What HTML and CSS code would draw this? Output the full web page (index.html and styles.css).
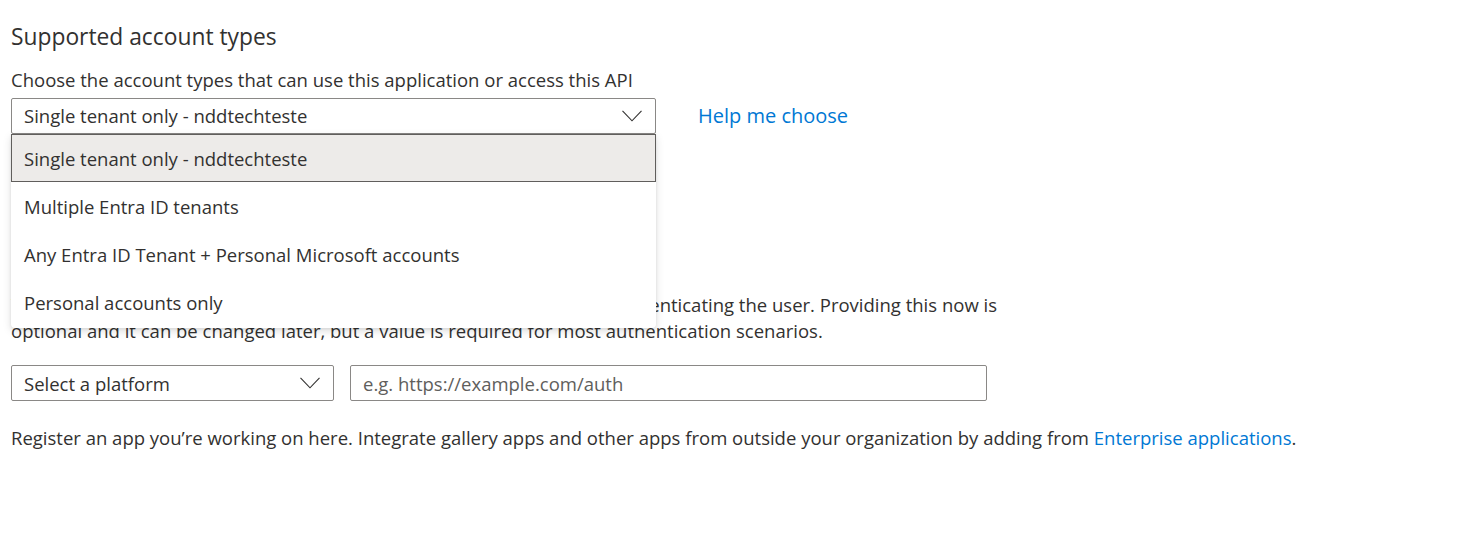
FILE: index.html
```html
<!DOCTYPE html>
<html lang="en">
<head>
<meta charset="utf-8">
<title>Register an application</title>
<link rel="stylesheet" href="styles.css">
</head>
<body>
<main class="page">
  <section class="section">
    <h2 class="section-title">Supported account types</h2>
    <div class="field-label">Choose the account types that can use this application or access this API</div>
    <div class="select-row">
      <div class="dropdown">
        <div class="dropdown-box">
          <span class="dropdown-value">Single tenant only - nddtechteste</span>
          <svg class="chevron" width="20" height="12" viewBox="0 0 20 12"><polyline points="0.5,0.8 10,10.8 19.5,0.8" fill="none" stroke="#323130" stroke-width="1.1"/></svg>
        </div>
        <ul class="dropdown-list">
          <li class="dropdown-item selected">Single tenant only - nddtechteste</li>
          <li class="dropdown-item">Multiple Entra ID tenants</li>
          <li class="dropdown-item">Any Entra ID Tenant + Personal Microsoft accounts</li>
          <li class="dropdown-item">Personal accounts only</li>
        </ul>
      </div>
      <a class="link help-link" href="#">Help me choose</a>
    </div>
  </section>

  <section class="section redirect">
    <p class="desc"><span class="nowrap">We’ll return the authentication response to this URI after successfully authenticating the user. Providing this now is</span><br>optional and it can be changed later, but a value is required for most authentication scenarios.</p>
    <div class="uri-row">
      <div class="platform-select">
        <span class="platform-value">Select a platform</span>
        <svg class="chevron" width="20" height="12" viewBox="0 0 20 12"><polyline points="0.5,0.8 10,10.8 19.5,0.8" fill="none" stroke="#323130" stroke-width="1.1"/></svg>
      </div>
      <div class="uri-input">e.g. https://example.com/auth</div>
    </div>
    <p class="footer-text">Register an app you’re working on here. Integrate gallery apps and other apps from outside your organization by adding from <a class="link" href="#">Enterprise applications</a>.</p>
  </section>
</main>
</body>
</html>
```

FILE: styles.css
```css
html, body {
  margin: 0;
  padding: 0;
  background: #ffffff;
}

body {
  font-family: "Open Sans", "Noto Sans", sans-serif;
  color: #323130;
  font-size: 18.5px;
}

.page {
  padding: 23px 0 0 11px;
}

.section-title {
  margin: 0;
  font-size: 22.8px;
  font-weight: 400;
  line-height: 28px;
}

.field-label {
  margin-top: 17px;
  line-height: 24px;
}

.select-row {
  margin-top: 6px;
  display: flex;
  align-items: center;
}

.dropdown {
  position: relative;
  width: 645px;
}

.dropdown-box {
  box-sizing: border-box;
  height: 36px;
  border: 1px solid #8a8886;
  border-radius: 2px;
  display: flex;
  align-items: center;
  justify-content: space-between;
  padding: 0 13px 0 12px;
}

.dropdown-value {
  line-height: 24px;
}

.chevron {
  display: block;
  flex: none;
}

.dropdown-list {
  position: absolute;
  top: 36px;
  left: 0;
  width: 645px;
  margin: 0;
  padding: 0 0 2px 0;
  list-style: none;
  background: #ffffff;
  border-radius: 0 0 4px 4px;
  box-shadow: 0 3px 8px rgba(0, 0, 0, 0.13), 0 1px 3px rgba(0, 0, 0, 0.08);
  z-index: 10;
}

.dropdown-item {
  box-sizing: border-box;
  height: 48px;
  display: flex;
  align-items: center;
  padding: 0 12px;
  border: 1px solid transparent;
}

.dropdown-item.selected {
  background: #edebe9;
  border-color: #605e5c;
}

.link {
  color: #0078d4;
  text-decoration: none;
}

.help-link {
  margin-left: 42px;
  font-size: 20px;
  line-height: 26px;
}

.redirect {
  margin-top: 158px;
}

.desc {
  margin: 0;
  line-height: 26px;
}

.nowrap {
  white-space: nowrap;
}

.uri-row {
  margin-top: 21px;
  display: flex;
  gap: 16px;
}

.platform-select {
  box-sizing: border-box;
  width: 323px;
  height: 36px;
  border: 1px solid #8a8886;
  border-radius: 2px;
  display: flex;
  align-items: center;
  justify-content: space-between;
  padding: 0 13px 0 12px;
}

.uri-input {
  box-sizing: border-box;
  width: 637px;
  height: 36px;
  border: 1px solid #8a8886;
  border-radius: 2px;
  display: flex;
  align-items: center;
  padding: 0 12px;
  color: #605e5c;
}

.footer-text {
  margin: 24px 0 0 0;
  line-height: 26px;
}
```
